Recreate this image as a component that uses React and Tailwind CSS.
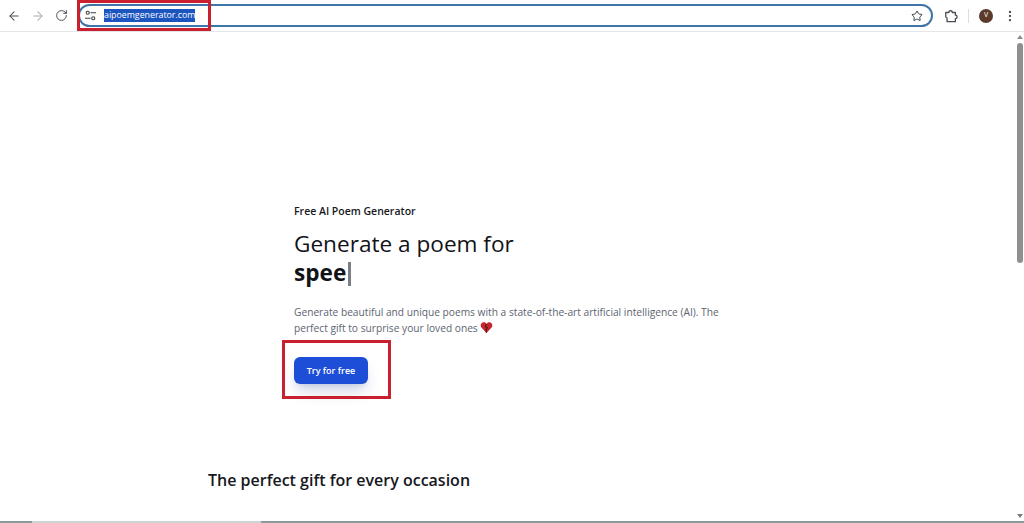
import { ArrowLeft, ArrowRight, RotateCw, Star, EllipsisVertical } from "lucide-react";

function SiteControls() {
  return (
    <svg viewBox="0 0 12 12" className="h-[11px] w-[11px] shrink-0" fill="none" stroke="currentColor" strokeWidth="1.200">
      <circle cx="3" cy="3" r="1.700" />
      <path d="M6 3h6M0 9h6" />
      <circle cx="9" cy="9" r="1.700" />
    </svg>
  );
}

function Extensions() {
  return (
    <svg viewBox="0 0 16 16" className="ml-[11px] h-[14px] w-[14px] shrink-0" fill="none" stroke="currentColor" strokeWidth="1.500" strokeLinejoin="round">
      <path d="M2 4h3.500a2 2 0 0 1 4 0H13v3a2 2 0 0 1 0 4v3.500H3.500V11a1.800 1.800 0 0 0-1.500-2z" />
    </svg>
  );
}

function BrowserBar() {
  return (
    <div className="flex h-[32px] shrink-0 items-center border-b border-[#e4e6e8] bg-white text-[#4a4d51]">
      <div className="flex items-center gap-[10px] pl-[7px]">
        <ArrowLeft size={14} strokeWidth={1.8} />
        <ArrowRight size={14} strokeWidth={1.8} className="text-[#a9acb0]" />
        <RotateCw size={13} strokeWidth={1.8} />
      </div>
      <div className="ml-[10px] flex h-[23px] w-[855px] items-center rounded-full border-2 border-[#3f74a8] pl-[5px] pr-[8px] text-[#3c3f43]">
        <SiteControls />
        <span className="ml-[8px] bg-[#1a55c0] text-[8.8px] leading-[13px] text-white">aipoemgenerator.com</span>
        <Star size={12} strokeWidth={2} className="ml-auto" />
      </div>
      <Extensions />
      <div className="ml-[10px] h-[14px] w-px bg-[#dcdee0]" />
      <div className="ml-[10px] flex h-[14px] w-[14px] items-center justify-center rounded-full bg-[#5b3a2c] text-[7px] text-white">V</div>
      <EllipsisVertical size={14} strokeWidth={2} className="ml-[10px]" />
    </div>
  );
}

function Scrollbar() {
  return (
    <div className="flex w-[8px] shrink-0 flex-col items-center bg-white pt-[3px]">
      <div className="h-0 w-0 border-x-[3px] border-b-[4px] border-x-transparent border-b-[#8b8d90]" />
      <div className="mt-[4px] h-[220px] w-[6px] rounded-full bg-[#8d8f91]" />
      <div className="mt-auto mb-[3px] h-0 w-0 border-x-[3px] border-t-[4px] border-x-transparent border-t-[#7a7c7f]" />
    </div>
  );
}

export default function App() {
  return (
    <div className="relative flex h-[523px] w-[1024px] flex-col overflow-hidden bg-white font-['Open_Sans',sans-serif]">
      <BrowserBar />
      <div className="flex min-h-0 flex-1">
        <main className="flex-1 pl-[208px] pt-[171px]">
          <div className="pl-[86px]">
            <p className="text-[10.5px] leading-[16px] font-semibold text-[#16181d]">Free AI Poem Generator</p>
            <h1 className="mt-[11px] text-[22.6px] leading-[27px] text-[#111318]">
              Generate a poem for
              <br />
              <span className="font-bold">spee</span>
              <span className="ml-[2px] inline-block h-[24px] w-[3px] translate-y-[5px] bg-[#7c7f85]" />
            </h1>
            <p className="mt-[18px] w-[430px] text-[10.2px] leading-[16px] text-[#5c6470]">
              Generate beautiful and unique poems with a state-of-the-art artificial intelligence (AI). The perfect gift to surprise your loved ones{" "}
              <svg viewBox="0 0 24 24" className="inline-block h-[13px] w-[13px] align-[-2px]">
                <path d="M12 22 2.500 12C-.5 8 2 2.500 7 2.500c2.300 0 4 1.200 5 3 1-1.800 2.700-3 5-3 5 0 7.500 5.500 4.500 9.500z" fill="#c4262e" />
                <path d="M12 5.500 10 10l3.500 2.500-2.500 4 1 5.500" fill="none" stroke="#4a1518" strokeWidth="2" />
              </svg>
            </p>
            <button type="button" className="mt-[21px] flex h-[27px] w-[74px] items-center justify-center rounded-[6px] bg-[#1d4ed8] text-[9px] font-semibold text-white shadow-lg shadow-blue-900/20">
              Try for free
            </button>
          </div>
          <h2 className="mt-[85px] text-[16px] leading-[22px] font-semibold text-[#16181d]">The perfect gift for every occasion</h2>
        </main>
        <Scrollbar />
      </div>
      <div className="flex h-[2px] shrink-0">
        <div className="w-[32px] bg-[#8b9a9c]" />
        <div className="w-[229px] bg-[#ccd3d5]" />
        <div className="flex-1 bg-[#8b9a9c]" />
      </div>
      {/* red annotation boxes drawn over the screenshot */}
      <div className="absolute left-[77px] top-0 h-[31px] w-[134px] border-[3px] border-[#c8202f]" />
      <div className="absolute left-[282px] top-[340px] h-[59px] w-[109px] border-[3px] border-[#c8202f]" />
    </div>
  );
}
